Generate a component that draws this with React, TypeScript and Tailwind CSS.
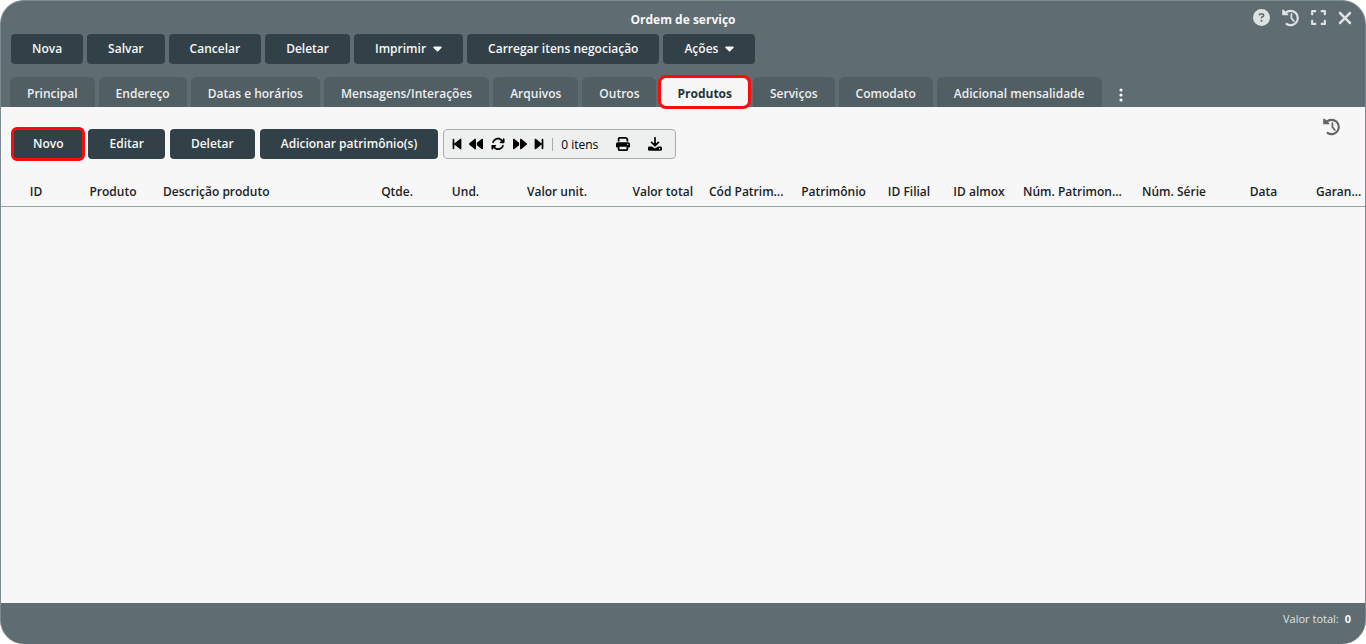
import {
  FaArrowsRotate,
  FaBackward,
  FaBackwardStep,
  FaCircleQuestion,
  FaExpand,
  FaForward,
  FaForwardStep,
  FaPrint,
  FaXmark,
} from 'react-icons/fa6';

const actions = [
  { label: 'Nova' },
  { label: 'Salvar' },
  { label: 'Cancelar' },
  { label: 'Deletar' },
  { label: 'Imprimir', menu: true },
  { label: 'Carregar itens negociação' },
  { label: 'Ações', menu: true },
];

const tabs = [
  'Principal',
  'Endereço',
  'Datas e horários',
  'Mensagens/Interações',
  'Arquivos',
  'Outros',
  'Produtos',
  'Serviços',
  'Comodato',
  'Adicional mensalidade',
];

const columns = [
  { label: 'ID', style: 'w-[70px] text-center' },
  { label: 'Produto', style: 'w-[84px] text-center' },
  { label: 'Descrição produto', style: 'w-[206px] text-left' },
  { label: 'Qtde.', style: 'w-[60px] text-right' },
  { label: 'Und.', style: 'w-[89px] text-center' },
  { label: 'Valor unit.', style: 'w-[85px] text-right' },
  { label: 'Valor total', style: 'w-[106px] text-right' },
  { label: 'Cód Patrim...', style: 'w-[91px] text-left' },
  { label: 'Patrimônio', style: 'w-[83px] text-center' },
  { label: 'ID Filial', style: 'w-[68px] text-center' },
  { label: 'ID almox', style: 'w-[72px] text-center' },
  { label: 'Núm. Patrimon...', style: 'w-[114px] text-left' },
  { label: 'Núm. Série', style: 'w-[90px] text-center' },
  { label: 'Data', style: 'w-[89px] text-center' },
  { label: 'Garan...', style: 'w-[57px] text-left' },
];

const CaretIcon = () => (
  <svg viewBox="0 0 9 6" fill="currentColor" className="w-[9px] h-[6px]">
    <path d="M1 0.5h7a.8.8 0 0 1 .6 1.3L5.1 5.3a.85.85 0 0 1-1.2 0L.4 1.8A.8.8 0 0 1 1 .5z" />
  </svg>
);

const HistoryIcon = ({ className }: { className: string }) => (
  <svg viewBox="0 0 18 18" fill="none" stroke="currentColor" className={className}>
    <path d="M3.6 3.8A7.2 7.2 0 1 1 4.6 15" strokeWidth="2.2" strokeLinecap="round" />
    <path d="M0.2 0.8h1.6l4.6 4.6v0.9H0.2z" fill="currentColor" stroke="none" />
    <path d="M9.4 5.2v4l2.4 2.8" strokeWidth="1.8" strokeLinecap="round" />
  </svg>
);

const DownloadIcon = () => (
  <svg viewBox="0 0 14 14" fill="none" stroke="currentColor" className="size-[14px]">
    <path d="M7 0.8v7.6M3.6 5.4L7 8.7l3.4-3.3" strokeWidth="1.7" strokeLinecap="round" />
    <path
      d="M1.4 9.6h2.4L7 11.4l3.2-1.8h2.4A1.4 1.4 0 0 1 14 11v1.4a1.4 1.4 0 0 1-1.4 1.4H1.4A1.4 1.4 0 0 1 0 12.4V11a1.4 1.4 0 0 1 1.4-1.4zM11.6 11.1a.7.7 0 1 0 0 1.4.7.7 0 0 0 0-1.4z"
      fill="currentColor"
      fillRule="evenodd"
      stroke="none"
    />
  </svg>
);

const App = () => {
  return (
    <div className="min-h-screen flex flex-col overflow-hidden rounded-[24px] border border-b-0 border-[#7c8a91] bg-[#5f6c71] font-['Open_Sans',sans-serif] text-xs">
      <header>
        <div className="grid grid-cols-3 h-[33px]">
          <h1 className="col-start-2 pt-[11px] text-center font-bold text-[#f7f7f7]">
            Ordem de serviço
          </h1>
          <div className="flex items-center justify-end gap-[10px] pr-[10px] text-[#dde1e2]">
            <button aria-label="Ajuda"><FaCircleQuestion className="size-[17px]" /></button>
            <button aria-label="Histórico" className="ml-[2px]"><HistoryIcon className="size-[18px]" /></button>
            <button aria-label="Expandir"><FaExpand className="size-[17px]" /></button>
            <button aria-label="Fechar" className="-ml-[2px]"><FaXmark className="size-5" /></button>
          </div>
        </div>

        <div className="flex gap-1 px-[10px]">
          {actions.map((action) => (
            <button
              key={action.label}
              className="flex items-center gap-[7px] h-[30px] px-[21px] rounded bg-[#324148] font-semibold text-[#f7f7f7] whitespace-nowrap">
              {action.label}
              {action.menu && <CaretIcon />}
            </button>
          ))}
        </div>

        <nav className="flex gap-1 mt-[13px] px-[9px]">
          {tabs.map((tab) => (
            <button
              key={tab}
              className={
                tab === 'Produtos'
                  ? 'relative h-[30px] px-[17px] pt-1 rounded-md bg-[#f7f7f7] font-bold text-[#263238] outline-3 -outline-offset-1 outline-[#ff0a0a]'
                  : 'h-[30px] px-[17px] pt-1 rounded-t-md bg-[#515e63] font-semibold text-[#eceff0] whitespace-nowrap'
              }>
              {tab}
            </button>
          ))}
          <button aria-label="Mais abas" className="w-[30px] flex justify-center pt-[11px] text-[#f7f7f7]">
            <svg viewBox="0 0 4 14" fill="currentColor" className="w-1 h-[14px]">
              <circle cx="2" cy="2" r="1.6" />
              <circle cx="2" cy="7" r="1.6" />
              <circle cx="2" cy="12" r="1.6" />
            </svg>
          </button>
        </nav>
      </header>

      <main className="grow bg-[#f7f7f7]">
        <div className="flex items-start justify-between pl-[10px] pr-6">
          <div className="flex items-center gap-[5px] h-[34px] mt-5">
            <button className="h-[34px] -mr-[2px] px-[19px] rounded-md border-[3px] border-[#ff0a0a] bg-[#324148] font-semibold text-[#f7f7f7]">
              Novo
            </button>
            <button className="h-[30px] px-[21px] rounded bg-[#324148] font-semibold text-[#f7f7f7]">
              Editar
            </button>
            <button className="h-[30px] px-[21px] rounded bg-[#324148] font-semibold text-[#f7f7f7]">
              Deletar
            </button>
            <button className="h-[30px] px-[21px] rounded bg-[#324148] font-semibold text-[#f7f7f7]">
              Adicionar patrimônio(s)
            </button>
            <div className="flex items-center h-[30px] pl-[6px] pr-[13px] rounded border border-[#a3adb3] bg-[#eef0f0] text-black">
              <button aria-label="Primeira"><FaBackwardStep className="size-[14px]" /></button>
              <button aria-label="Anterior" className="ml-[5px]"><FaBackward className="size-[14px]" /></button>
              <button aria-label="Atualizar" className="ml-2"><FaArrowsRotate className="size-[14px]" /></button>
              <button aria-label="Próxima" className="ml-2"><FaForward className="size-[14px]" /></button>
              <button aria-label="Última" className="ml-[5px]"><FaForwardStep className="size-[14px]" /></button>
              <span className="ml-[6px] h-[13px] border-l border-[#a3adb3]" />
              <span className="ml-2 pt-[2px]">0 itens</span>
              <button aria-label="Imprimir lista" className="ml-[18px]"><FaPrint className="size-[14px]" /></button>
              <button aria-label="Baixar" className="ml-[18px]"><DownloadIcon /></button>
            </div>
          </div>
          <button aria-label="Histórico de produtos" className="mt-[11px] text-[#666]">
            <HistoryIcon className="size-[18px]" />
          </button>
        </div>

        <table className="w-full mt-[15px] table-fixed border-b border-[#97a2a9] text-[#1b2226]">
          <thead>
            <tr className="h-[30px]">
              {columns.map((column) => (
                <th
                  key={column.label}
                  className={`px-2 pt-[2px] font-semibold whitespace-nowrap ${column.style}`}>
                  {column.label}
                </th>
              ))}
            </tr>
          </thead>
        </table>
      </main>

      <footer className="flex justify-end gap-[6px] h-[41px] pt-[9px] pr-[14px] text-[11px] text-[#dfe3e4]">
        <span>Valor total:</span>
        <span className="font-bold text-[#f7f7f7]">0</span>
      </footer>
    </div>
  );
};

export default App;
